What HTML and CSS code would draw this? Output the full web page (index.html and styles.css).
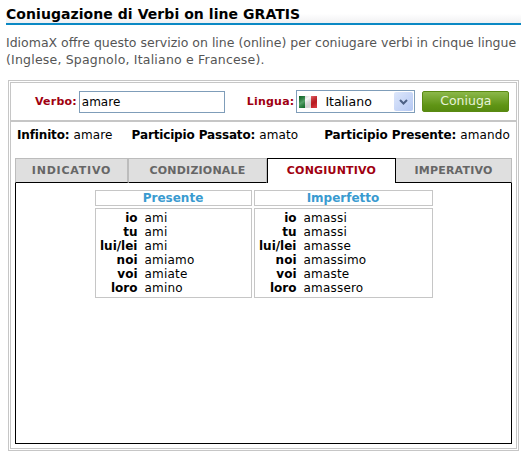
FILE: index.html
```html
<!DOCTYPE html>
<html lang="it">
<head>
  <meta charset="UTF-8">
  <title>Coniugazione di Verbi</title>
  <link rel="stylesheet" href="styles.css">
</head>
<body>

  <h1 class="title">Coniugazione di Verbi on line GRATIS</h1>
  <p class="intro">IdiomaX offre questo servizio on line (online) per coniugare verbi in cinque lingue <span class="intro-end">(Inglese, Spagnolo, Italiano e Francese).</span></p>

  <div class="box">
    <div class="box-inner">
      <div class="search">
        <label class="label">Verbo:</label>
        <div class="verb-input">amare</div>
        <label class="label lang-label">Lingua:</label>
        <div class="select">
          <svg class="flag" width="18" height="12" viewBox="0 0 18 12">
            <defs>
              <linearGradient id="shade" x1="0" y1="0" x2="1" y2="1">
                <stop offset="0" stop-color="#000" stop-opacity="0.2"/>
                <stop offset="0.35" stop-color="#fff" stop-opacity="0.3"/>
                <stop offset="0.7" stop-color="#000" stop-opacity="0.15"/>
                <stop offset="1" stop-color="#fff" stop-opacity="0.15"/>
              </linearGradient>
            </defs>
            <rect width="6" height="12" fill="#0f7a2a"/>
            <rect x="6" width="6" height="12" fill="#f4f4f4"/>
            <rect x="12" width="6" height="12" fill="#d81f26"/>
            <rect width="18" height="12" fill="url(#shade)"/>
          </svg>
          <span class="select-text">Italiano</span>
          <span class="arrow">
            <svg width="9" height="6" viewBox="0 0 9 6"><path d="M1 1 L4.5 4.5 L8 1" fill="none" stroke="#4d6185" stroke-width="2"/></svg>
          </span>
        </div>
        <div class="button">Coniuga</div>
      </div>

      <div class="forms">
        <span><b>Infinito:</b> amare</span>
        <span class="form-past"><b>Participio Passato:</b> amato</span>
        <span class="form-present"><b>Participio Presente:</b> amando</span>
      </div>

      <div class="tabs">
        <div class="tab tab-1">INDICATIVO</div>
        <div class="tab tab-2">CONDIZIONALE</div>
        <div class="tab tab-3 active">CONGIUNTIVO</div>
        <div class="tab tab-4">IMPERATIVO</div>
      </div>

      <div class="panel">
        <div class="tense">
          <div class="tense-name">Presente</div>
          <div class="tense-rows">
            <div class="row"><b>io</b><span>ami</span></div>
            <div class="row"><b>tu</b><span>ami</span></div>
            <div class="row"><b>lui/lei</b><span>ami</span></div>
            <div class="row"><b>noi</b><span>amiamo</span></div>
            <div class="row"><b>voi</b><span>amiate</span></div>
            <div class="row"><b>loro</b><span>amino</span></div>
          </div>
        </div>
        <div class="tense tense-wide">
          <div class="tense-name">Imperfetto</div>
          <div class="tense-rows">
            <div class="row"><b>io</b><span>amassi</span></div>
            <div class="row"><b>tu</b><span>amassi</span></div>
            <div class="row"><b>lui/lei</b><span>amasse</span></div>
            <div class="row"><b>noi</b><span>amassimo</span></div>
            <div class="row"><b>voi</b><span>amaste</span></div>
            <div class="row"><b>loro</b><span>amassero</span></div>
          </div>
        </div>
      </div>
    </div>
  </div>

</body>
</html>
```

FILE: styles.css
```css
html, body {
  margin: 0;
  padding: 0;
}

body {
  width: 524px;
  height: 453px;
  overflow: hidden;
  background: #fff;
  font-family: "DejaVu Sans", Verdana, sans-serif;
  font-size: 12px;
  color: #000;
}

.title {
  margin: 0 3px 0 6px;
  padding-top: 6px;
  height: 17px;
  font-size: 14px;
  line-height: 17px;
  letter-spacing: 0.06px;
  border-bottom: 2px solid #0b89c4;
  background: linear-gradient(#fff 60%, #f0f0f2);
}

.intro {
  margin: 9px 3px 0 6px;
  line-height: 17px;
  font-size: 12.5px;
  color: #555;
}

.intro-end {
  letter-spacing: 0.2px;
}

.box {
  box-sizing: border-box;
  width: 511px;
  height: 371px;
  margin: 12px 0 0 8px;
  padding: 1px;
  border: 1px solid #c6c6c6;
}

.box-inner {
  box-sizing: border-box;
  height: 367px;
  border: 1px solid #c6c6c6;
}

.search {
  display: flex;
  align-items: center;
  height: 37px;
  border-bottom: 2px solid #c6c6c6;
  padding-left: 24px;
}

.label {
  font-weight: bold;
  font-size: 11px;
  letter-spacing: 0.2px;
  color: #a00010;
}

.verb-input {
  box-sizing: border-box;
  width: 146px;
  height: 22px;
  margin-left: 2px;
  padding-left: 2px;
  border: 1px solid #7f9db9;
  line-height: 20px;
}

.lang-label {
  margin-left: 22px;
}

.select {
  box-sizing: border-box;
  display: flex;
  align-items: center;
  width: 119px;
  height: 23px;
  margin-left: 2px;
  border: 1px solid #7f9db9;
  padding: 0 1px 0 2px;
}

.select-text {
  flex: 1;
  margin-left: 8px;
  font-size: 12.5px;
}

.arrow {
  display: flex;
  align-items: center;
  justify-content: center;
  width: 19px;
  height: 19px;
  border-radius: 2px;
  background: linear-gradient(135deg, #dde7fb, #b5c8f3);
}

.button {
  box-sizing: border-box;
  width: 87px;
  height: 21px;
  margin-left: 7px;
  border: 1px solid #5a8a12;
  border-radius: 2px;
  background: linear-gradient(#8cb84a, #5f9415 70%, #578a10);
  color: #e8f3d8;
  text-align: center;
  font-size: 12.5px;
  line-height: 18px;
}

.forms {
  display: flex;
  padding: 5px 6px 0 6px;
  line-height: 17px;
  letter-spacing: 0.15px;
}

.forms b {
  letter-spacing: -0.15px;
}

.form-past {
  margin-left: 19px;
}

.form-present {
  margin-left: auto;
}

.form-present b {
  letter-spacing: -0.1px;
}

.tabs {
  display: flex;
  margin: 14px 0 0 4px;
  height: 25px;
  position: relative;
  z-index: 1;
}

.tab {
  box-sizing: border-box;
  height: 25px;
  border: 1px solid #bcbcbc;
  border-bottom: 1px solid #000;
  border-left-width: 0;
  background: #dfdfdf;
  color: #666;
  font-size: 11px;
  font-weight: bold;
  letter-spacing: 0.2px;
  line-height: 23px;
  text-align: center;
}

.tab-1 {
  width: 114px;
  border-left-width: 1px;
  border-right-width: 2px;
  letter-spacing: 0.8px;
}

.tab-2 {
  width: 138px;
}

.tab-3 {
  width: 129px;
}

.tab-4 {
  width: 116px;
}

.tab.active {
  border: 1px solid #000;
  border-bottom: 0;
  background: #fff;
  color: #a00010;
}

.panel {
  box-sizing: border-box;
  display: flex;
  justify-content: center;
  gap: 2px;
  width: 497px;
  height: 262px;
  margin: -1px 0 0 4px;
  border: 1px solid #000;
  padding-top: 7px;
}

.tense {
  width: 157px;
}

.tense-wide {
  width: 179px;
}

.tense-name {
  box-sizing: border-box;
  height: 16px;
  border: 1px solid #c6c6c6;
  color: #3a9bd0;
  font-weight: bold;
  line-height: 14px;
  text-align: center;
}

.tense-rows {
  box-sizing: border-box;
  height: 90px;
  margin-top: 2px;
  border: 1px solid #c6c6c6;
  padding-top: 2px;
}

.row {
  display: flex;
  gap: 7px;
  height: 14px;
  line-height: 14px;
}

.row b {
  width: 42px;
  text-align: right;
}

.row span {
  letter-spacing: 0.2px;
}
```
